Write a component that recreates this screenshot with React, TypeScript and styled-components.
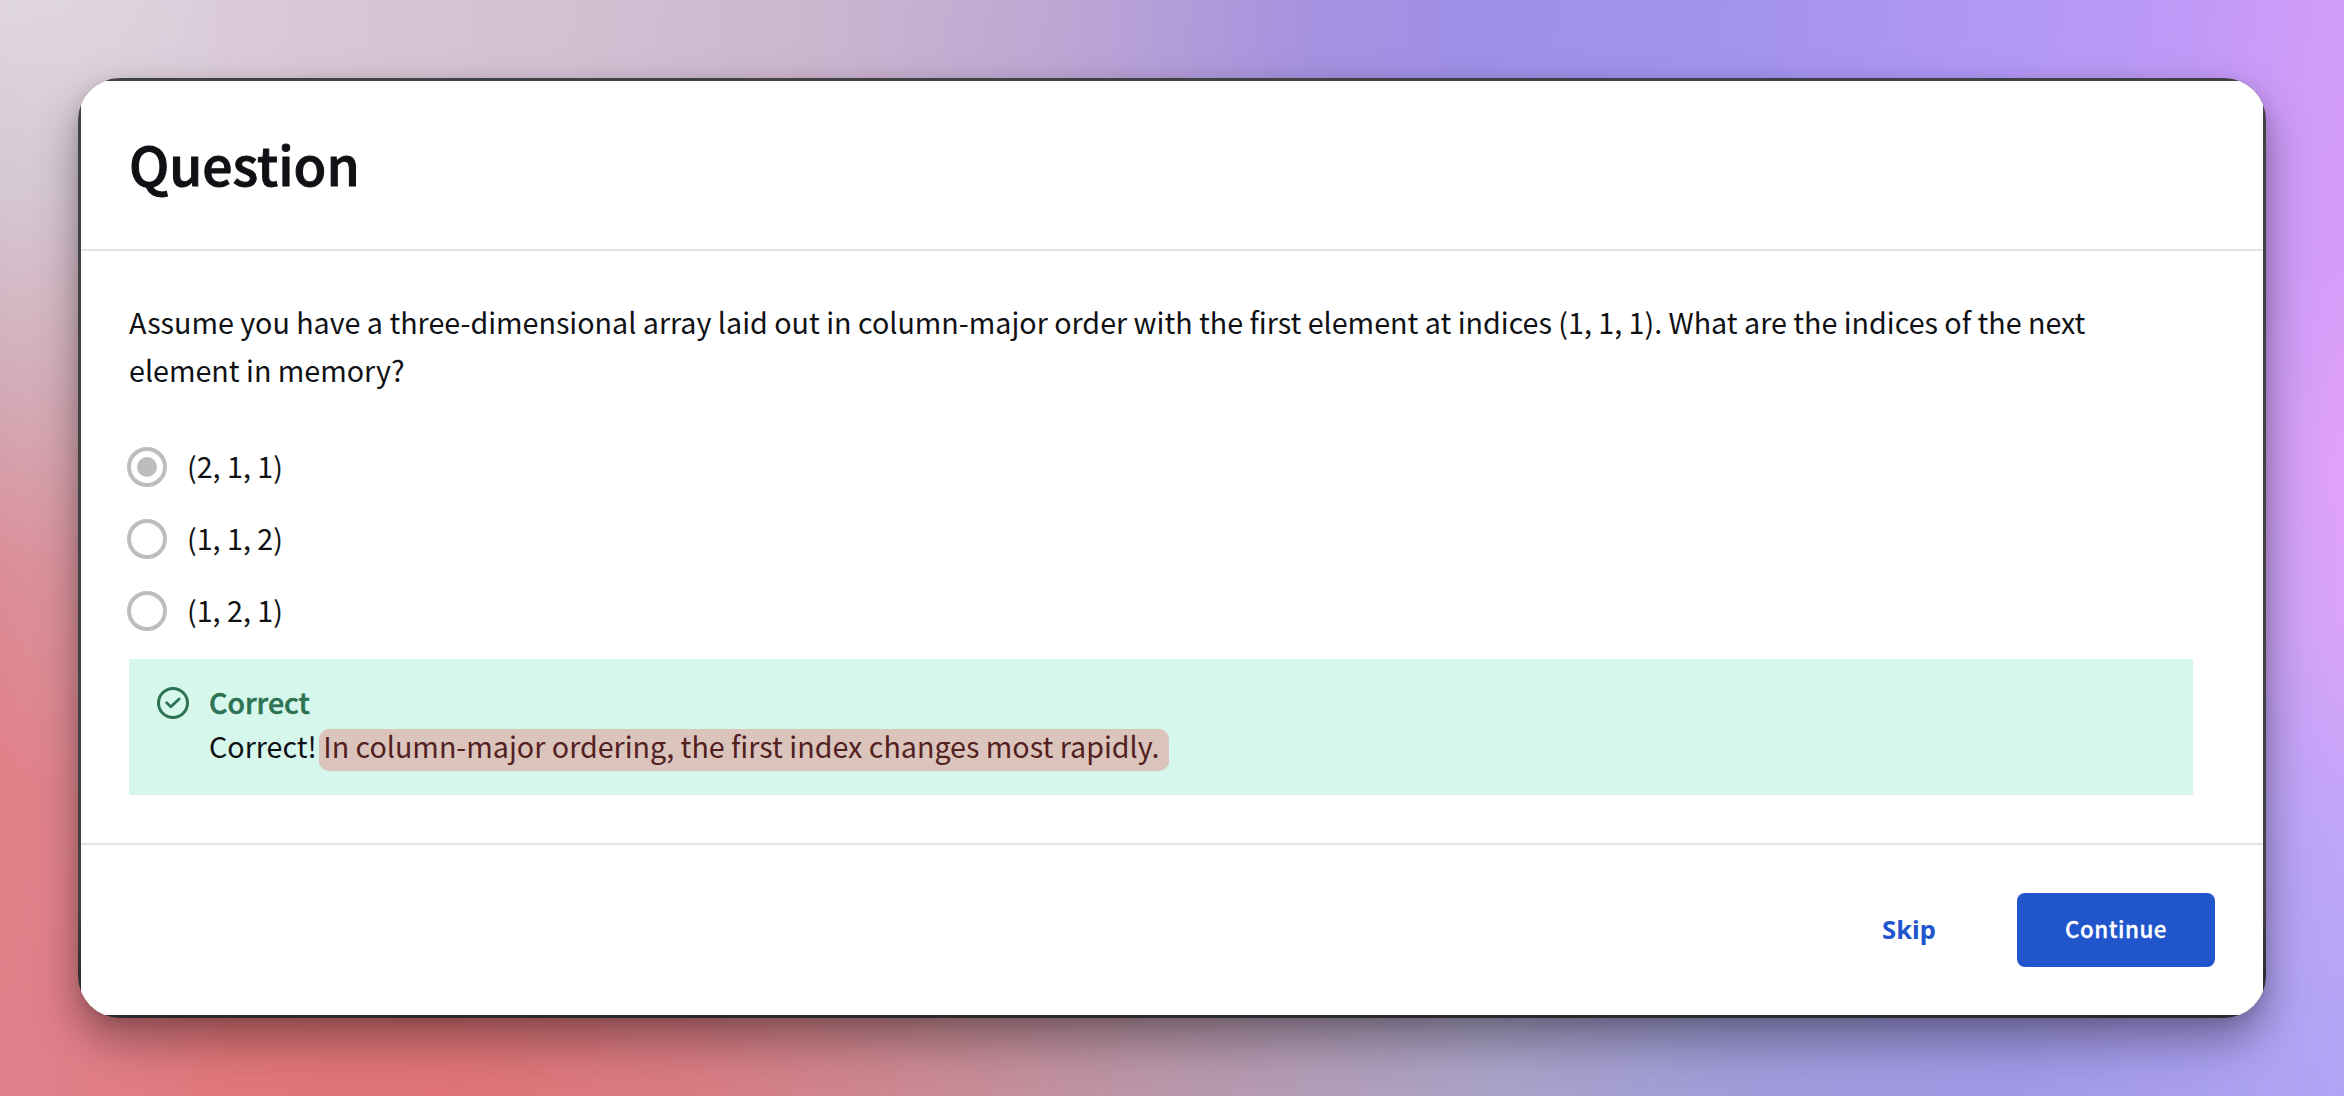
import React from "react";
import styled, { createGlobalStyle } from "styled-components";

const Global = createGlobalStyle`
  * { box-sizing: border-box; }
  body { margin: 0; font-family: "Noto Sans CJK SC", "Noto Sans", sans-serif; color: #0f1114; }
`;

const Backdrop = styled.main`
  height: 1096px;
  padding: 78px;
  overflow: hidden;
  position: relative;
  isolation: isolate;
  background: linear-gradient(94deg, #dfd6e0 0%, #d9c5d5 14%, #d3bfd2 24%, #ccb5cf 34%, #bda6d4 44%, #a692df 54%, #9f8fe8 61%, #a393ee 72%, #b298f5 83%, #c39af8 93%, #d09cf8 100%);

  &::before, &::after { content: ""; position: absolute; inset: 0; z-index: -2; }
  &::before {
    background: linear-gradient(90deg, #e07f8a 0%, #e07678 10%, #df7376 19%, #d77c83 30%, #c98a94 40%, #b997aa 50%, #aaa2c6 63%, #9f9cd9 74%, #a198e6 86%, #afa4f4 100%);
    mask-image: linear-gradient(180deg, transparent 10%, #000 92%);
  }
  &::after {
    z-index: -1;
    background:
      linear-gradient(180deg, #dfd6e0 0%, #d4c6d2 18%, #d2a9b5 36%, #da8d97 52%, #e17f87 72%, #e07f8a 100%) left / 50% 100% no-repeat,
      linear-gradient(180deg, #d09cf8 0%, #d69df8 25%, #e1a1f8 42%, #d9a4f8 58%, #bfa5f8 76%, #afa4f4 100%) right / 50% 100% no-repeat;
    mask-image: linear-gradient(90deg, #000 0%, transparent 10%, transparent 93%, #000 100%);
  }
`;

const Frame = styled.section`
  height: 940px;
  padding: 3px;
  border-radius: 42px;
  overflow: hidden;
  background: linear-gradient(180deg, #424244 0%, #424244 88%, #2a2a2c 97%);
  box-shadow: 0 22px 44px rgba(0, 0, 0, 0.36), 0 4px 14px rgba(0, 0, 0, 0.1);
`;

const Dialog = styled.div`
  height: 100%;
  display: flex;
  flex-direction: column;
  background: #fff;
`;

const Header = styled.header`
  height: 170px;
  padding: 0 48px 4px;
  display: flex;
  align-items: center;
  border-bottom: 2px solid #e3e3e3;
`;

const Title = styled.h1`
  margin: 0;
  font-size: 53.4px;
  line-height: 80px;
  font-weight: 500;
  -webkit-text-stroke: 1px currentColor;
`;

const Body = styled.div`
  flex: 1;
  padding: 47px 70px 0 48px;
`;

const Prompt = styled.p`
  margin: 0 0 49px;
  font-size: 28.66px;
  line-height: 48px;
`;

const Options = styled.div`
  display: grid;
  grid-auto-rows: 48px;
  row-gap: 24px;
`;

const Option = styled.label`
  display: flex;
  align-items: center;
  gap: 20px;
  margin-left: -2px;
`;

const OptionText = styled.span`
  padding-bottom: 2px;
  font-size: 28.66px;
  line-height: 44px;
`;

const Radio = styled.span<{ $checked: boolean }>`
  width: 40px;
  height: 40px;
  border: 4px solid #bdbdbd;
  border-radius: 50%;
  display: grid;
  place-items: center;

  &::after {
    content: "";
    width: 20px;
    height: 20px;
    border-radius: 50%;
    background: ${(p) => (p.$checked ? "#bdbdbd" : "transparent")};
  }
`;

const Feedback = styled.div`
  margin-top: 24px;
  height: 136px;
  padding: 21px 28px;
  display: flex;
  gap: 20px;
  background: #d6f7eb;
`;

const CheckIcon = styled.svg`
  width: 32px;
  height: 32px;
  margin-top: 7px;
  flex: none;
`;

const FeedbackText = styled.div`
  font-size: 28.66px;
  line-height: 44px;
`;

const FeedbackTitle = styled.div`
  color: #2d7253;
  font-size: 28.5px;
  font-weight: 500;
  -webkit-text-stroke: 0.5px currentColor;
`;

const Mark = styled.span`
  display: inline-block;
  height: 42px;
  line-height: 34px;
  margin-left: -4px;
  padding: 0 9px 0 4px;
  border-radius: 10px;
  background: #dbc4bc;
  color: #52211f;
`;

const Footer = styled.footer`
  height: 172px;
  padding: 0 48px;
  display: flex;
  align-items: center;
  justify-content: flex-end;
  gap: 32px;
  border-top: 2px solid #e3e3e3;
`;

const Button = styled.button<{ $primary?: boolean }>`
  height: 74px;
  width: ${(p) => (p.$primary ? 198 : 152)}px;
  padding: ${(p) => (p.$primary ? "0 0 4px" : "0 0 2px")};
  border: 0;
  border-radius: 8px;
  font: ${(p) => (p.$primary ? '500 22.4px "Noto Sans CJK SC", sans-serif' : '700 25.6px "Noto Sans", sans-serif')};
  letter-spacing: ${(p) => (p.$primary ? "0.5px" : "0")};
  -webkit-text-stroke: ${(p) => (p.$primary ? "0.3px currentColor" : "0")};
  background: ${(p) => (p.$primary ? "#2155cb" : "transparent")};
  color: ${(p) => (p.$primary ? "#fff" : "#2155cb")};
`;

const options = ["(2, 1, 1)", "(1, 1, 2)", "(1, 2, 1)"];

export default function App() {
  return (
    <>
      <Global />
      <Backdrop>
        <Frame>
          <Dialog>
            <Header>
              <Title>Question</Title>
            </Header>
            <Body>
              <Prompt>
                Assume you have a three-dimensional array laid out in column-major order with the first element at indices (1, 1, 1). What are the indices of the next element in memory?
              </Prompt>
              <Options>
                {options.map((text, i) => (
                  <Option key={text}>
                    <Radio $checked={i === 0} />
                    <OptionText>{text}</OptionText>
                  </Option>
                ))}
              </Options>
              <Feedback>
                <CheckIcon viewBox="0 0 32 32" fill="none" stroke="#2d7253" strokeWidth="3">
                  <circle cx="16" cy="16" r="14.5" />
                  <path d="M9.6 15.8L13.8 19.8L22.2 12" strokeWidth="2.8" strokeLinecap="round" strokeLinejoin="round" />
                </CheckIcon>
                <FeedbackText>
                  <FeedbackTitle>Correct</FeedbackTitle>
                  <div>
                    Correct! <Mark>In column-major ordering, the first index changes most rapidly.</Mark>
                  </div>
                </FeedbackText>
              </Feedback>
            </Body>
            <Footer>
              <Button>Skip</Button>
              <Button $primary>Continue</Button>
            </Footer>
          </Dialog>
        </Frame>
      </Backdrop>
    </>
  );
}
